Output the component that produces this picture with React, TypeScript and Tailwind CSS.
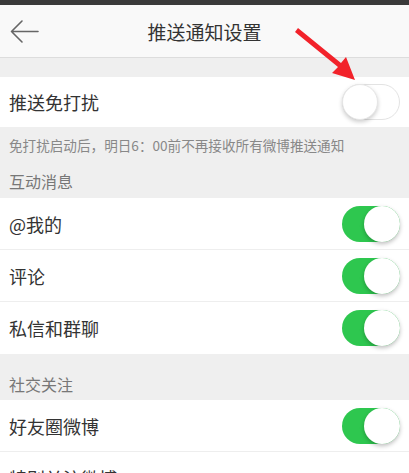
import React from "react";

function Toggle({ on }: { on: boolean }) {
  return on ? (
    <div className="relative w-[58px] h-[36px] rounded-full bg-[#2ec74f] shrink-0">
      <div className="absolute right-0 top-0 w-[36px] h-[36px] rounded-full bg-white shadow-[0_2px_4px_rgba(0,0,0,0.25)]" />
    </div>
  ) : (
    <div className="relative w-[58px] h-[36px] rounded-full bg-white border border-[#e3e3e3] shrink-0">
      <div className="absolute left-[-1px] top-[-1px] w-[36px] h-[36px] rounded-full bg-white border border-[#e6e6e6] shadow-[0_2px_4px_rgba(0,0,0,0.2)]" />
    </div>
  );
}

function Row({ label, on, border = false, h = "h-[52px]" }: { label: string; on?: boolean; border?: boolean; h?: string }) {
  return (
    <div className={`flex items-center justify-between bg-white pl-[9px] pr-[9px] ${h} ${border ? "border-b border-[#eeeeee]" : ""}`}>
      <span className="text-[18px] text-[#333333] leading-none">{label}</span>
      {on !== undefined && <Toggle on={on} />}
    </div>
  );
}

export default function App() {
  return (
    <div
      className="relative w-[409px] h-[473px] overflow-hidden bg-[#efefef]"
      style={{ fontFamily: '"Noto Sans CJK SC", "Noto Sans", sans-serif' }}
    >
      <div className="h-[5px] bg-[#3a3a3a]" />
      <div className="relative h-[53px] bg-[#f9f9f9] border-b border-[#dddddd] flex items-center justify-center">
        <svg className="absolute left-[9px] top-[14px]" width="32" height="26" viewBox="0 0 32 26" fill="none">
          <path d="M29 12.5H2.5M13 2L2.5 12.5L13 23" stroke="#666" strokeWidth="1.6" strokeLinecap="round" strokeLinejoin="round" />
        </svg>
        <span className="text-[19px] text-[#333333] leading-none">推送通知设置</span>
      </div>
      <div className="h-[19px]" />
      <Row label="推送免打扰" on={false} h="h-[50px]" />
      <div className="h-[37px] flex items-center pl-[9px]">
        <span className="text-[13.6px] text-[#888888] leading-none">免打扰启动后，明日6：00前不再接收所有微博推送通知</span>
      </div>
      <div className="h-[34px] flex items-center pl-[9px]">
        <span className="text-[16px] text-[#777777] leading-none">互动消息</span>
      </div>
      <Row label="@我的" on={true} border />
      <Row label="评论" on={true} border />
      <Row label="私信和群聊" on={true} />
      <div className="h-[46px] flex items-end pb-[8px] pl-[9px]">
        <span className="text-[16px] text-[#777777] leading-none">社交关注</span>
      </div>
      <Row label="好友圈微博" on={true} border h="h-[52px]" />
      <Row label="特别关注微博" />
      <svg className="absolute left-0 top-0 pointer-events-none" width="409" height="473" viewBox="0 0 409 473">
        <polygon points="295,32 298,28 341,63 346,57 355,80 332,73 338,67" fill="#f2222a" />
      </svg>
    </div>
  );
}
